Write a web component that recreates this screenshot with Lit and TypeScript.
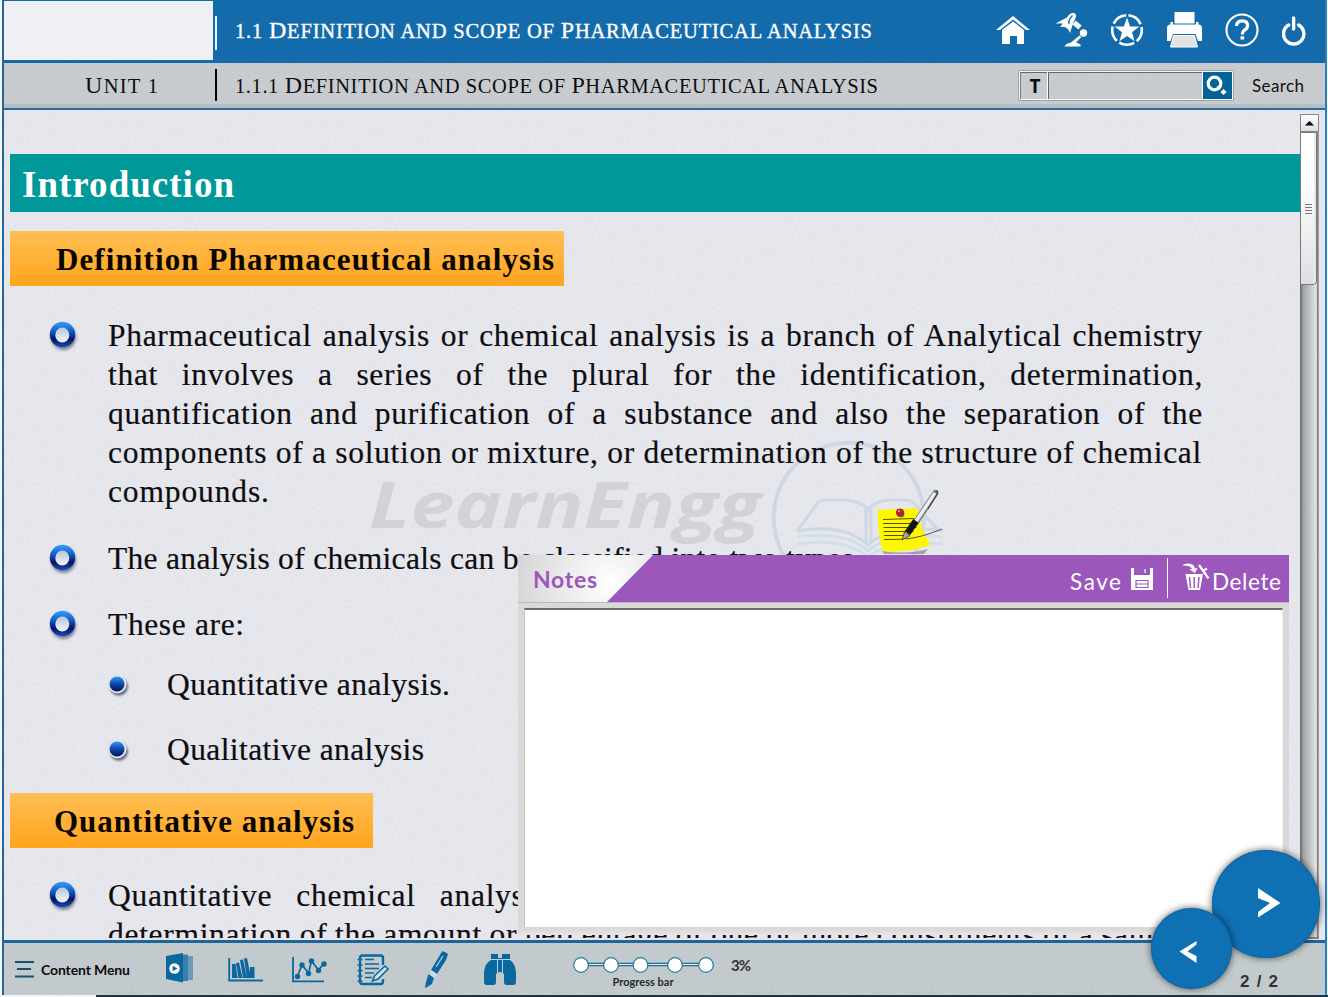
import { LitElement, html, svg, css } from "lit";
import { customElement, property } from "lit/decorators.js";

/** One line of text whose letter or word spacing is tuned so that it fills a given width. */
@customElement("fit-text")
class FitText extends LitElement {
  @property({ type: Number }) w = 0;
  @property() mode = "letter";
  static styles = css`
    :host { display: inline-block; white-space: nowrap; }
    .run { display: inline-block; white-space: pre; }
  `;
  firstUpdated() {
    const run = this.renderRoot.querySelector(".run") as HTMLElement;
    const text = (this.textContent || "").trim();
    if (this.mode === "word") run.style.letterSpacing = "0.7px";
    const natural = run.getBoundingClientRect().width;
    if (this.mode === "word") {
      run.style.wordSpacing = (this.w - natural) / (text.split(" ").length - 1) + "px";
    } else {
      run.style.letterSpacing = (this.w - natural) / (text.length - 1) + "px";
    }
    this.style.width = this.w + "px";
  }
  render() {
    return html`<span class="run"><slot></slot></span>`;
  }
}

const icon = (x: number, y: number, w: number, h: number, body: unknown) =>
  html`<svg width=${w} height=${h} viewBox="${x} ${y} ${w} ${h}">${body}</svg>`;

const line = (w: number, text: string, mode = "letter") =>
  html`<fit-text w=${w} mode=${mode}>${text}</fit-text>`;

const BLUE = "#0a689e";

@customElement("app-root")
class AppRoot extends LitElement {
  static styles = css`
    :host { display: block; width: 1328px; height: 997px; overflow: hidden; background: #f4f7fa; color: #0d0d12; font-family: "Liberation Serif", serif; }
    * { box-sizing: border-box; }
    svg { display: block; flex: none; }
    .frame { position: relative; display: flex; flex-direction: column; width: 1325px; height: 995px; margin-left: 2px; border-left: 2px solid #25659a; border-right: 2px solid #2b7fb8; }
    .under { display: flex; height: 2px; }
    .under .pale { width: 96px; background: #f1f3f4; }
    .under .dark { flex: 1; background: #1e3444; }

    .top { display: flex; align-items: flex-start; height: 63px; background: #136bab; color: #fff; flex: none; }
    .logo { width: 209px; height: 59px; margin-top: 1px; background: #eff0f4; }
    .rule { width: 2px; height: 34px; margin: 16px 0 0 2px; background: #e9f4fb; }
    .title { margin: 16px 0 0 18px; font-size: 20.5px; line-height: 28px; text-transform: uppercase; -webkit-text-stroke: 0.35px currentColor; }
    .big { font-size: 24px; }
    .tools { display: flex; gap: 23px; margin: 10px 0 0 auto; padding-right: 19px; }

    .sub { display: flex; align-items: flex-start; height: 47px; flex: none; border-bottom: 2px solid #2a6c9b; background: var(--grain), linear-gradient(#cbced0 0 41px, #b4c1c7 41px); }
    :host {
      --grain: url("data:image/svg+xml,%3Csvg xmlns='http://www.w3.org/2000/svg' width='160' height='160'%3E%3Cfilter id='n'%3E%3CfeTurbulence type='fractalNoise' baseFrequency='.5' numOctaves='2' stitchTiles='stitch'/%3E%3CfeColorMatrix values='0 0 0 0 .3 0 0 0 0 .33 0 0 0 0 .35 .3 0 0 0 -.1'/%3E%3C/filter%3E%3Crect width='160' height='160' filter='url(%23n)'/%3E%3C/svg%3E");
      --paper: url("data:image/svg+xml,%3Csvg xmlns='http://www.w3.org/2000/svg' width='200' height='200'%3E%3Cfilter id='n'%3E%3CfeTurbulence type='fractalNoise' baseFrequency='.3' numOctaves='2' stitchTiles='stitch'/%3E%3CfeColorMatrix values='0 0 0 0 .35 0 0 0 0 .36 0 0 0 0 .42 .16 0 0 0 -.06'/%3E%3C/filter%3E%3Crect width='200' height='200' filter='url(%23n)'/%3E%3C/svg%3E");
    }
    .unit { width: 211px; padding: 9px 0 0 81px; font-size: 20.5px; line-height: 27px; text-transform: uppercase; }
    .subrule { width: 2px; height: 32px; margin-top: 6px; background: #050505; }
    .subtitle { padding: 9px 0 0 18px; font-size: 20.5px; line-height: 27px; text-transform: uppercase; }
    .find { display: flex; width: 214px; height: 29px; margin: 8px 19px 0 auto; border: 1px solid #f8f8f8; box-shadow: inset 0 1px 0 #666, 0 0 0 0.5px #777; }
    .kind { width: 28px; border-right: 1px solid #fff; border-left: 1px solid #777; font: 700 19px/28px "Open Sans", sans-serif; text-align: center; padding-left: 2px; }
    .field { flex: 1; border-left: 1px solid #666; border-right: 1px solid #fff; }
    .go { width: 29px; padding-top: 1px; background: #036399; }
    .searchword { width: 73px; padding-top: 9px; font: 17px/28px Lato, sans-serif; color: #111; }

    .stage { position: relative; display: flex; height: 830px; flex: none; overflow: hidden; background: var(--paper), #e7e8ed; }
    .doc { position: relative; width: 1296px; height: 828px; overflow: hidden; padding: 44px 0 0 6px; flex: none; }
    .intro { height: 58px; padding: 9px 0 0 12px; background: #009898; color: #fff; font-weight: 700; font-size: 37px; line-height: 43px; margin: 0; }
    .tag { height: 55px; padding: 8px 0 0 46px; background: linear-gradient(#ffbf54, #ffa41c); color: #0b0500; font-weight: 700; font-size: 31px; line-height: 41px; margin: 0; white-space: nowrap; }
    .tag1 { width: 554px; margin-top: 19px; }
    .tag2 { width: 363px; margin-top: 24px; padding-left: 44px; }
    .item { display: flex; font-size: 31.5px; line-height: 39px; -webkit-text-stroke: 0.2px currentColor; }
    .item .mark { width: 98px; padding: 4px 0 0 37px; flex: none; }
    .copy { display: flex; flex-direction: column; }
    .i1 { margin-top: 30px; }
    .i2 { margin-top: 28px; }
    .i3 { margin-top: 27px; }
    .s1 { margin-top: 21px; }
    .s2 { margin-top: 26px; }
    .i4 { margin-top: 28px; }
    .item .dot { width: 157px; padding: 5px 0 0 95px; flex: none; }

    .wm { position: absolute; left: 0; top: 0; }
    .wmtext { font-family: "Open Sans", sans-serif; font-weight: 700; font-style: italic; }

    .scroll { position: relative; width: 19px; height: 825px; margin-top: 4px; background: linear-gradient(90deg, #62686b, #a0a4a6 18%, #d2d4d4 70%, #e6e6e8 86%, #818487 92%, #73777b 96%, #e8e8ec); border-bottom: 2px solid #85858a; flex: none; }
    .up { height: 18px; border: 1px solid #85878b; background: linear-gradient(#fff, #dedede); }
    .thumb { display: flex; align-items: center; justify-content: center; width: 17px; height: 153px; border: 1px solid #77797c; border-radius: 0 0 4px 0; background: linear-gradient(#fff 30%, #dedfe1); box-shadow: inset -2px 0 #e8e8e8; }

    .notes { position: absolute; left: 514px; top: 445px; width: 771px; height: 380px; background: linear-gradient(#d9d9d9 0 374px, #e5e5e8); display: flex; flex-direction: column; }
    .nhead { position: relative; display: flex; height: 48px; flex: none; background: radial-gradient(circle at 92px 28px, #fff, #d3d3d3 100px); border-bottom: 1px solid #bbb; }
    .tab { width: 89px; padding: 9px 0 0 15px; color: #9c57bd; font: 700 23px/30px Lato, sans-serif; flex: none; }
    .bar { display: flex; flex: 1; background: #9c57bd; clip-path: polygon(46px 0, 100% 0, 100% 100%, 0 100%); color: #fff; justify-content: flex-end; padding-right: 8px; }
    .act { padding-top: 13px; font: 22.5px/28px Lato, sans-serif; }
    .disk { margin: 13px 14px 0 10px; }
    .split { width: 1px; height: 40px; margin-top: 3px; background: #fff; }
    .bin { margin: 7px 2px 0 14px; }
    .area { margin: 5px 6px 0; height: 319px; background: #fff; border-top: 2px solid #6c6c6c; border-left: 1px solid #c2c2c2; border-right: 1px solid #eee; }
    .sticker { position: absolute; left: 870px; top: 376px; }

    .bottom { display: flex; align-items: flex-start; flex: 1; border-top: 3px solid #1f659b; background: var(--grain), #c5cccf; color: #0b0b0b; font-family: Lato, sans-serif; }
    .menu { display: flex; gap: 7px; width: 162px; padding: 17px 0 0 11px; font-weight: 700; font-size: 14px; line-height: 20px; }
    .gap1 { margin: 8px 0 0 0; display: flex; }
    .prog { display: flex; flex-direction: column; align-items: center; width: 142px; margin: 14px 0 0 54px; font-weight: 700; font-size: 11px; line-height: 12px; color: #26292b; }
    .prog svg { margin-bottom: 3px; }
    .pct { padding-top: 12px; margin-left: 17px; font-weight: 700; font-size: 15px; line-height: 20px; color: #333; }
    .page { margin: 29px 47px 0 auto; font: 700 17px/20px "Liberation Sans", sans-serif; color: #333; }

    .fab { position: absolute; border-radius: 50%; background: #0f70b3; box-shadow: 0 0 6px 1px rgba(0,0,0,.5), inset 0 0 2px #0a5990; }
    .next { left: 1207.5px; top: 849.5px; width: 108px; height: 108px; }
    .prev { left: 1146.5px; top: 907.5px; width: 81.5px; height: 81.5px; }
  `;

  ring() {
    return icon(47, 320, 32, 32, svg`
      <defs><linearGradient id="rg" x1="0" y1="0" x2="0" y2="1"><stop offset="0" stop-color="#38a0ff"/><stop offset=".38" stop-color="#1459c4"/><stop offset=".7" stop-color="#061266"/><stop offset="1" stop-color="#1b50c0"/></linearGradient>
      <linearGradient id="rw" x1="0" y1="0" x2="0" y2="1"><stop offset="0" stop-color="#b7c6d8"/><stop offset="1" stop-color="#f3f6fb"/></linearGradient>
      <filter id="rb" x="-30%" y="-30%" width="160%" height="160%"><feGaussianBlur stdDeviation="1.4"/></filter></defs>
      <circle cx="63.5" cy="337.500" r="12.500" fill="#55596a" opacity=".7" filter="url(#rb)"/>
      <circle cx="62.500" cy="334.500" r="12.700" fill="url(#rg)"/>
      <ellipse cx="62.300" cy="335" rx="7" ry="7.600" fill="url(#rw)"/>`);
  }

  dot() {
    return icon(105, 670, 28, 32, svg`
      <defs><linearGradient id="dg" x1="0" y1="0" x2="0" y2="1"><stop offset="0" stop-color="#3296f5"/><stop offset=".5" stop-color="#0f47ab"/><stop offset="1" stop-color="#04104f"/></linearGradient>
      <filter id="db" x="-30%" y="-30%" width="160%" height="160%"><feGaussianBlur stdDeviation="1.2"/></filter></defs>
      <circle cx="118.800" cy="686.500" r="9.200" fill="#50546a" opacity=".85" filter="url(#db)"/>
      <circle cx="117.300" cy="684" r="9.300" fill="#dce4ef"/>
      <circle cx="117" cy="684" r="7.500" fill="url(#dg)"/>`);
  }

  headIcons() {
    return html`<div class="tools">
      ${icon(996, 10, 36, 40, svg`<path fill="#fff" d="M1013 16l17 14h-4l-13-10.500L1000 30h-4z"/><path fill="#fff" d="M1002 30l11-8.500 11 8.500v14h-7v-8h-7v8h-8z"/>`)}
      ${icon(1055, 10, 33, 40, svg`<g fill="#fff"><path d="M1055.500 23.500L1067 17.500q2-4 5.500-4.500 4-.5 3.500 3.500-.5 3-2.500 5.500l-3.500 11q-1.500-4-4-5.500-2-1-6-.5l3-3.500z"/><circle cx="1083.500" cy="33" r="3.700"/><path d="M1064.500 46.500q1-3 6.500-4l8.500-7 1.800 1.500-5.300 5.500q3 1 4.500 2v2z"/></g><path d="M1074 22.500l6 5" stroke="#fff" stroke-width="5"/><path d="M1069 24q-1-4 3.500-8.500" stroke="#136bab" stroke-width="1.400" fill="none"/>`)}
      ${icon(1111, 10, 33, 40, svg`<circle cx="1127" cy="30" r="14.800" fill="none" stroke="#fff" stroke-width="2.600" stroke-dasharray="15.600 3" stroke-dashoffset="-1.500" transform="rotate(-90 1127 30)"/><path fill="#fff" d="M1127 17.500l3.100 8.900 9.300.1-7.400 5.700 2.600 9.100-7.600-5.400-7.600 5.400 2.600-9.100-7.400-5.700 9.300-.1z"/>`)}
      ${icon(1167, 10, 35, 40, svg`<path fill="#fff" d="M1174.500 12h20v11.500h-20zM1170.500 24.500h28q3.500 0 3.500 3.500v13h-4l-2.500-7h-22.500l-2.500 7h-3.500V28q0-3.500 3.500-3.500z"/><path fill="#fff" d="M1170.500 22h2.500v4h-2.500zM1196 22h2.500v4h-2.500z"/><path fill="#e2e2e2" stroke="#fff" d="M1173.500 35.500h21l3 11.500h-27z"/>`)}
      ${icon(1225, 10, 34, 40, svg`<circle cx="1242" cy="30" r="15.500" fill="none" stroke="#fff" stroke-width="2.100"/><path d="M1236.500 26q.3-5.200 5.500-5.200 5.600 0 5.600 4.700 0 2.800-3.400 4.900-1.900 1.300-1.900 4.100" fill="none" stroke="#fff" stroke-width="3.200"/><path fill="#fff" d="M1240.500 36.300h3.600v3.200h-3.600z"/>`)}
      ${icon(1282, 10, 24, 40, svg`<path d="M1288.700 25a10.200 10.200 0 1 0 10 0M1293.600 18v11" fill="none" stroke="#fff" stroke-width="3.400" stroke-linecap="round"/>`)}
    </div>`;
  }

  footIcons() {
    return html`<div class="gap1">
      ${icon(166, 950, 62, 40, svg`<path fill="${BLUE}" d="M166 955l17-3v29.500L166 978z"/><path fill="#3a7fac" d="M183 953.500h5v26.500h-5z"/><path fill="#7099b5" d="M188 955h5v24h-5z"/><circle cx="174.500" cy="967.500" r="5.300" fill="#fff"/><path fill="${BLUE}" d="M172.700 964.700l4.700 2.800-4.700 2.800z"/>`)}
      ${icon(228, 950, 64, 40, svg`<path d="M229.200 957v22.500H263" fill="none" stroke="${BLUE}" stroke-width="1.800"/><path fill="${BLUE}" d="M232 963h3.600l2 14H232zM236 962l3-.5 3.500 15.500h-4zM240 959l3-.5 4 18.500h-4zM244 957.500l3-.5 4 20h-4zM250 966h4.500v11H250z"/>`)}
      ${icon(292, 950, 64, 40, svg`<path d="M293 956v24.300h31" fill="none" stroke="${BLUE}" stroke-width="1.800"/><path d="M297.500 975l4.500-11 6.500 8 3-12 7 9 5-6" fill="none" stroke="${BLUE}" stroke-width="1.700"/><g fill="${BLUE}"><circle cx="297.500" cy="975.500" r="2.700"/><circle cx="302" cy="964" r="2.700"/><circle cx="308.500" cy="972.500" r="2.700"/><circle cx="311.500" cy="960" r="2.700"/><circle cx="318.500" cy="969.500" r="2.700"/><circle cx="324" cy="963" r="2.700"/></g>`)}
      ${icon(356, 950, 66, 40, svg`<path d="M383 964v-7q0-2.500-2.500-2.500h-18q-2.500 0-2.500 2.500v23.500q0 2.500 2.500 2.500h18q2.500 0 2.500-2.500V978" fill="none" stroke="${BLUE}" stroke-width="2.300"/><path d="M357.500 958.500h5M357.500 964h5M357.500 969.500h5M357.500 975h5M357.500 980h5M365 958.500h9M365 963h14M365 967.500h14M365 972h9M365 976.500h7" stroke="${BLUE}" stroke-width="1.600"/><path d="M385 965l3 3-10 10-5.500 2 2-5z" fill="#d8e1e5" stroke="${BLUE}" stroke-width="1.600"/>`)}
      ${icon(422, 950, 62, 40, svg`<path fill="${BLUE}" d="M442 950.500q1-1 6 2.500l-2 6-9 14-6-4z"/><path d="M443 955l-7 11" stroke="#bfd0d6" stroke-width="1.200"/><path fill="#c9dbe2" d="M431 969l6 4-2 5-6-4z"/><path fill="${BLUE}" d="M428.500 973l5.500 4-2 6-6.500 4-.5-.8 1-5.200z"/>`)}
      ${icon(484, 950, 34, 40, svg`<path fill="${BLUE}" d="M491 953h7v4h4v-4h8v6q5 3 6 12v10q0 3-2.500 3h-7q-2.500 0-2.500-3v-8q-4-4-8 0v8q0 3-2.500 3h-7q-2.500 0-2.500-3v-10q1-9 7-12z"/><path d="M491 958.500h19M497.500 958v14M502.500 958v14" stroke="#b8d0dc" stroke-width="1"/>`)}
    </div>`;
  }

  render() {
    return html`<div class="frame">
      <header class="top">
        <div class="logo"></div><div class="rule"></div>
        <div class="title"><fit-text w="637">1.1 <span class="big">D</span>efinition and scope of <span class="big">P</span>harmaceutical analysis</fit-text></div>
        ${this.headIcons()}
      </header>
      <div class="sub">
        <div class="unit"><fit-text w="73"><span class="big">U</span>nit 1</fit-text></div>
        <div class="subrule"></div>
        <div class="subtitle"><fit-text w="643">1.1.1 <span class="big">D</span>efinition and scope of <span class="big">P</span>harmaceutical analysis</fit-text></div>
        <div class="find"><div class="kind">T</div><div class="field"></div>
          <div class="go">${icon(1204, 73, 28, 26, svg`<circle cx="1215.500" cy="83.500" r="6.300" fill="none" stroke="#fff" stroke-width="3.200"/><path d="M1218 86.500l3 2.500" stroke="#fff" stroke-width="2"/><path fill="#fff" d="M1224.500 89l3 3-3 3-3-3z"/>`)}</div></div>
        <div class="searchword">${line(52, "Search")}</div>
      </div>
      <main class="stage">
        <svg class="wm" width="1296" height="828" viewBox="4 110 1296 828">
          <text class="wmtext" x="369" y="528" font-size="65" textLength="392" lengthAdjust="spacingAndGlyphs" fill="#d2d3d8">LearnEngg</text>
          <g fill="none" stroke="#d0d6e3" stroke-width="4"><path d="M789 563a75 75 0 1 1 121-2"/><path d="M797 531l20-27q2-4 9-4 35-2 42 10 7-12 36-10 8 0 11 4l24 27M866 509v34M871 509v34" stroke-width="3"/><path d="M797 531q48-8 71 14 25-22 75-14" stroke-width="3"/></g>
          <g fill="none" stroke="#cddfea" stroke-width="2.500"><path d="M797 537q50-6 71 14 25-20 75-14M797 544q50-6 71 13 25-19 75-13"/></g>
        </svg>
        <div class="doc">
          <h1 class="intro">${line(212, "Introduction")}</h1>
          <h2 class="tag tag1">${line(498, "Definition Pharmaceutical analysis")}</h2>
          <div class="item i1"><div class="mark">${this.ring()}</div><div class="copy">
            ${line(1095, "Pharmaceutical analysis or chemical analysis is a branch of Analytical chemistry", "word")}
            ${line(1095, "that involves a series of the plural for the identification, determination,", "word")}
            ${line(1095, "quantification and purification of a substance and also the separation of the", "word")}
            ${line(1094, "components of a solution or mixture, or determination of the structure of chemical", "word")}
            ${line(161, "compounds.")}
          </div></div>
          <div class="item i2"><div class="mark">${this.ring()}</div><div class="copy">${line(754, "The analysis of chemicals can be classified into two types.")}</div></div>
          <div class="item i3"><div class="mark">${this.ring()}</div><div class="copy">${line(136, "These are:")}</div></div>
          <div class="item s1"><div class="dot">${this.dot()}</div><div class="copy">${line(283, "Quantitative analysis.")}</div></div>
          <div class="item s2"><div class="dot">${this.dot()}</div><div class="copy">${line(257, "Qualitative analysis")}</div></div>
          <h2 class="tag tag2">${line(300, "Quantitative analysis")}</h2>
          <div class="item i4"><div class="mark">${this.ring()}</div><div class="copy">
            ${line(1095, "Quantitative chemical analysis is a branch of chemistry that deals with", "word")}
            ${line(1095, "determination of the amount or percentage of one or more constituents of a sample.", "word")}
          </div></div>
        </div>
        <div class="scroll">
          <div class="up">${icon(0, 0, 17, 16, svg`<path d="M4 10.500L8.500 6l4.500 4.500z" fill="#000"/>`)}</div>
          <div class="thumb">${icon(0, 0, 8, 10, svg`<path d="M0 .5h7M0 3.500h7M0 6.500h7M0 9.500h7" stroke="#777" stroke-width="1"/>`)}</div>
        </div>
        <section class="notes">
          <div class="nhead"><div class="tab">${line(64, "Notes")}</div>
            <div class="bar">
              <div class="act">${line(51, "Save")}</div>
              <div class="disk">${icon(0, 0, 22, 23, svg`<path fill="#fff" d="M0 0h3v9h16V0h3v22H0z"/><path fill="#fff" d="M3 7h16v3H3zM13.500 1h1.200v4h-1.200z"/><path d="M5 12.500h12v7H5zM5 16h12" stroke="#9c57bd" fill="none" stroke-width="1.200"/>`)}</div>
              <div class="split"></div>
              <div class="bin">${icon(1182, 562, 28, 32, svg`<path fill="#fff" d="M1185.500 574h17.500l-3 16h-11.500z"/><path fill="#fff" d="M1182 565.500q3-2.500 7-2 5 .5 6 5l2.500-.5-2.500 5-5.500-3.500 2.500-.8q-2-3.500-10-3.200z"/><path d="M1189.500 577l1 11M1194.200 577v11M1199 577l-1 11" stroke="#9c57bd" stroke-width="1.500"/><path d="M1199 565l9.500 13.500M1203 571l4-2.500" stroke="#fff" stroke-width="2.200"/>`)}</div>
              <div class="act">${line(69, "Delete")}</div>
            </div></div>
          <div class="area"></div>
        </section>
        <div class="sticker">${icon(874, 486, 72, 70, svg`
          <path d="M882 551q26 4 46-2l-4 5h-40z" fill="#888" opacity=".7"/>
          <path fill="#fff700" d="M877.500 510l40-2q2 20 13 37-25 8-48 6-5-20-5-41z"/>
          <path d="M883 519.500l31-1M883 523.500h32M883.500 527.500h33M883.500 531.500h30M884 535.500h26M884 539.500l18-.3" stroke="#565200" stroke-width="1.100"/>
          <circle cx="901" cy="514" r="3.500" fill="#777"/><circle cx="900" cy="512.500" r="4" fill="#b2222a"/><circle cx="899" cy="511.200" r="1.100" fill="#ed9090"/>
          <path d="M905 539q15-1 37-10" stroke="#555" stroke-width="1" fill="none"/>
          <path d="M916 522L935.500 493" stroke="#777e86" stroke-width="6" stroke-linecap="round"/><path d="M915.500 522L935 493" stroke="#eceef1" stroke-width="3.500"/><path d="M928 509l9-15v-4" stroke="#444" stroke-width="1.200" fill="none"/>
          <path d="M907.500 533L916 521" stroke="#151515" stroke-width="6.500"/><path d="M902 540l2.500-8 5.500 3.500z" fill="#aaa" stroke="#333" stroke-width=".8"/>`)}</div>
      </main>
      <footer class="bottom">
        <div class="menu">${icon(15, 960, 19, 22, svg`<path d="M15 962h19M17 969h14M15 976.500h19" stroke="#15526f" stroke-width="1.800"/>`)}${line(89, "Content Menu")}</div>
        ${this.footIcons()}
        <div class="prog">
          ${icon(572, 957, 142, 16, svg`<path d="M581 964.500h125" stroke="#1b7098" stroke-width="3.600"/><path d="M581 964.500h125" stroke="#e4eff3" stroke-width="1.200"/>${[581, 611, 640.5, 675, 706].map((x) => svg`<circle cx=${x} cy="965" r="7.300" fill="#fff" stroke="#2a7b9e" stroke-width="1.200"/>`)}`)}
          ${line(61, "Progress bar")}
        </div>
        <div class="pct">${line(20, "3%")}</div>
        <div class="page">${line(38, "2 / 2")}</div>
      </footer>
      <div class="fab next">${icon(1212, 850, 107, 107, svg`<path fill="#fff" d="M1258 888l22.500 15-22.500 14.500v-5.500l12-9-12-5z"/>`)}</div>
      <div class="fab prev">${icon(1151.5, 908, 81, 81, svg`<path fill="#fff" d="M1197 941v3.500l-9 7 9 4.500v7l-17-11.500z"/>`)}</div>
    </div>
    <div class="under"><div class="pale"></div><div class="dark"></div></div>`;
  }
}
